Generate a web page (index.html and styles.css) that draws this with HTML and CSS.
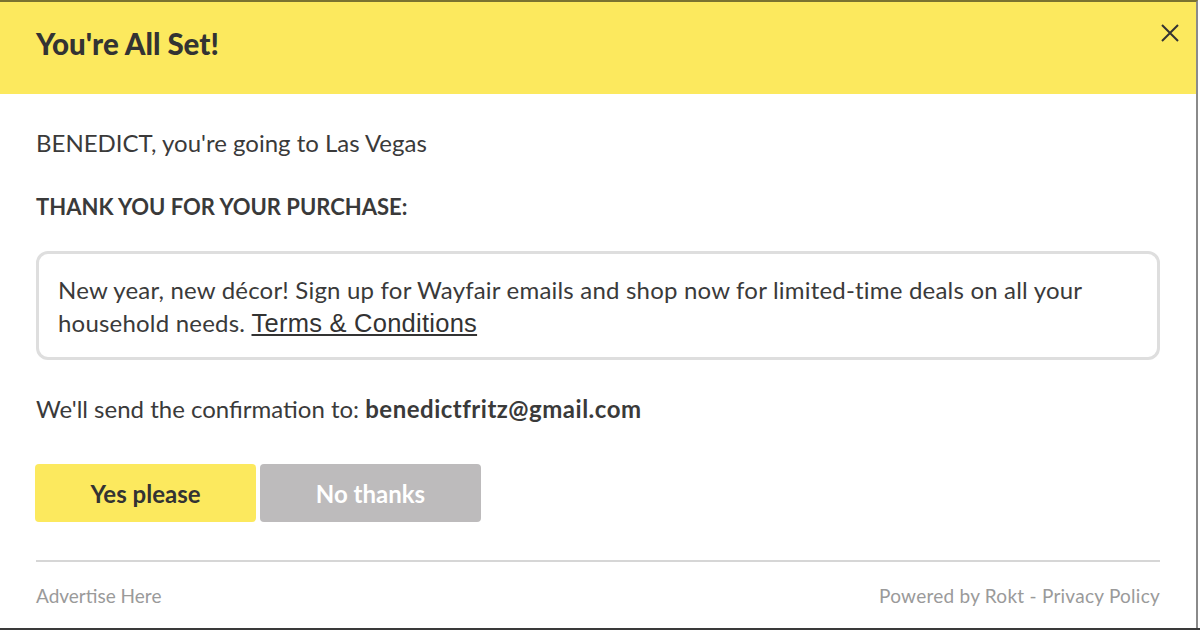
FILE: index.html
```html
<!DOCTYPE html>
<html>
<head>
<meta charset="utf-8">
<link rel="stylesheet" href="styles.css">
</head>
<body>
<div class="page">
  <div class="modal">
    <div class="header">
      <h1 class="title">You're All Set!</h1>
      <button class="close" aria-label="Close">
        <svg width="20" height="20" viewBox="0 0 20 20"><path d="M2 2 L18 18 M18 2 L2 18" stroke="#333" stroke-width="2" fill="none"/></svg>
      </button>
    </div>
    <div class="body">
      <p class="greeting">BENEDICT, you're going to Las Vegas</p>
      <p class="thanks">THANK YOU FOR YOUR PURCHASE:</p>
      <div class="offer">New year, new décor! Sign up for Wayfair emails and shop now for limited-time deals on all your household needs. <a class="terms" href="#">Terms &amp; Conditions</a></div>
      <p class="confirm">We'll send the confirmation to: <strong>benedictfritz@gmail.com</strong></p>
      <div class="actions">
        <button class="btn yes">Yes please</button>
        <button class="btn no">No thanks</button>
      </div>
      <div class="footer">
        <span>Advertise Here</span>
        <span class="powered">Powered by Rokt - Privacy Policy</span>
      </div>
    </div>
  </div>
  <div class="backdrop-strip"></div>
</div>
</body>
</html>
```
FILE: styles.css
```css
* { box-sizing: border-box; }
html, body { margin: 0; padding: 0; }
body {
  width: 1200px;
  height: 630px;
  overflow: hidden;
  background: #fff;
  font-family: Lato, "Open Sans", sans-serif;
  color: #3a3a3a;
}
.page {
  display: flex;
  flex-direction: column;
  width: 1200px;
  height: 630px;
}
.modal {
  width: 1198px;
  height: 628px;
  border-top: 2px solid #7a7230;
  border-right: 2px solid #8a8a8a;
  background: #fff;
  display: flex;
  flex-direction: column;
}
.backdrop-strip {
  height: 2px;
  background: #3a3a3a;
  width: 1200px;
}
.header {
  height: 92px;
  background: #fce95e;
  display: flex;
  align-items: flex-start;
  justify-content: space-between;
  padding: 0 16px 0 36px;
}
.title {
  margin: 24px 0 0 0;
  font-size: 29.5px;
  line-height: 36px;
  font-weight: 900;
  color: #333;
}
.close {
  margin-top: 21px;
  background: none;
  border: 0;
  padding: 0;
  width: 20px;
  height: 20px;
  display: flex;
}
.body {
  padding: 0 36px 0 36px;
  display: flex;
  flex-direction: column;
}
.greeting {
  margin: 34px 0 0 0;
  font-size: 24px;
  line-height: 30px;
}
.thanks {
  margin: 34px 0 0 0;
  font-size: 22px;
  line-height: 30px;
  font-weight: 700;
}
.offer {
  margin-top: 29px;
  border: 3px solid #dedede;
  border-radius: 12px;
  padding: 19px 20px 18px 19px;
  font-size: 24px;
  line-height: 33px;
  letter-spacing: 0.2px;
}
.terms {
  font-family: "Liberation Sans", Arial, sans-serif;
  color: #333;
  text-decoration: underline;
  font-size: 25.5px;
  line-height: 1;
  letter-spacing: 0.25px;
}
.confirm {
  margin: 34px 0 0 0;
  font-size: 24px;
  line-height: 30px;
}
.confirm strong { font-weight: 700; letter-spacing: 0.5px; }
.actions {
  margin-top: 40px;
  display: flex;
  gap: 4px;
}
.btn {
  width: 221px;
  height: 58px;
  border: 0;
  border-radius: 4px;
  font-family: Lato, "Open Sans", sans-serif;
  font-size: 24px;
  font-weight: 700;
}
.yes { background: #fce95e; color: #333; margin-left: -1px; }
.no { background: #bdbbbc; color: #fff; }
.footer {
  margin-top: 38px;
  border-top: 2px solid #d6d6d6;
  padding-top: 22px;
  display: flex;
  justify-content: space-between;
  font-size: 19px;
  color: #9a9a9a;
}
.powered { letter-spacing: 0.25px; }
```
